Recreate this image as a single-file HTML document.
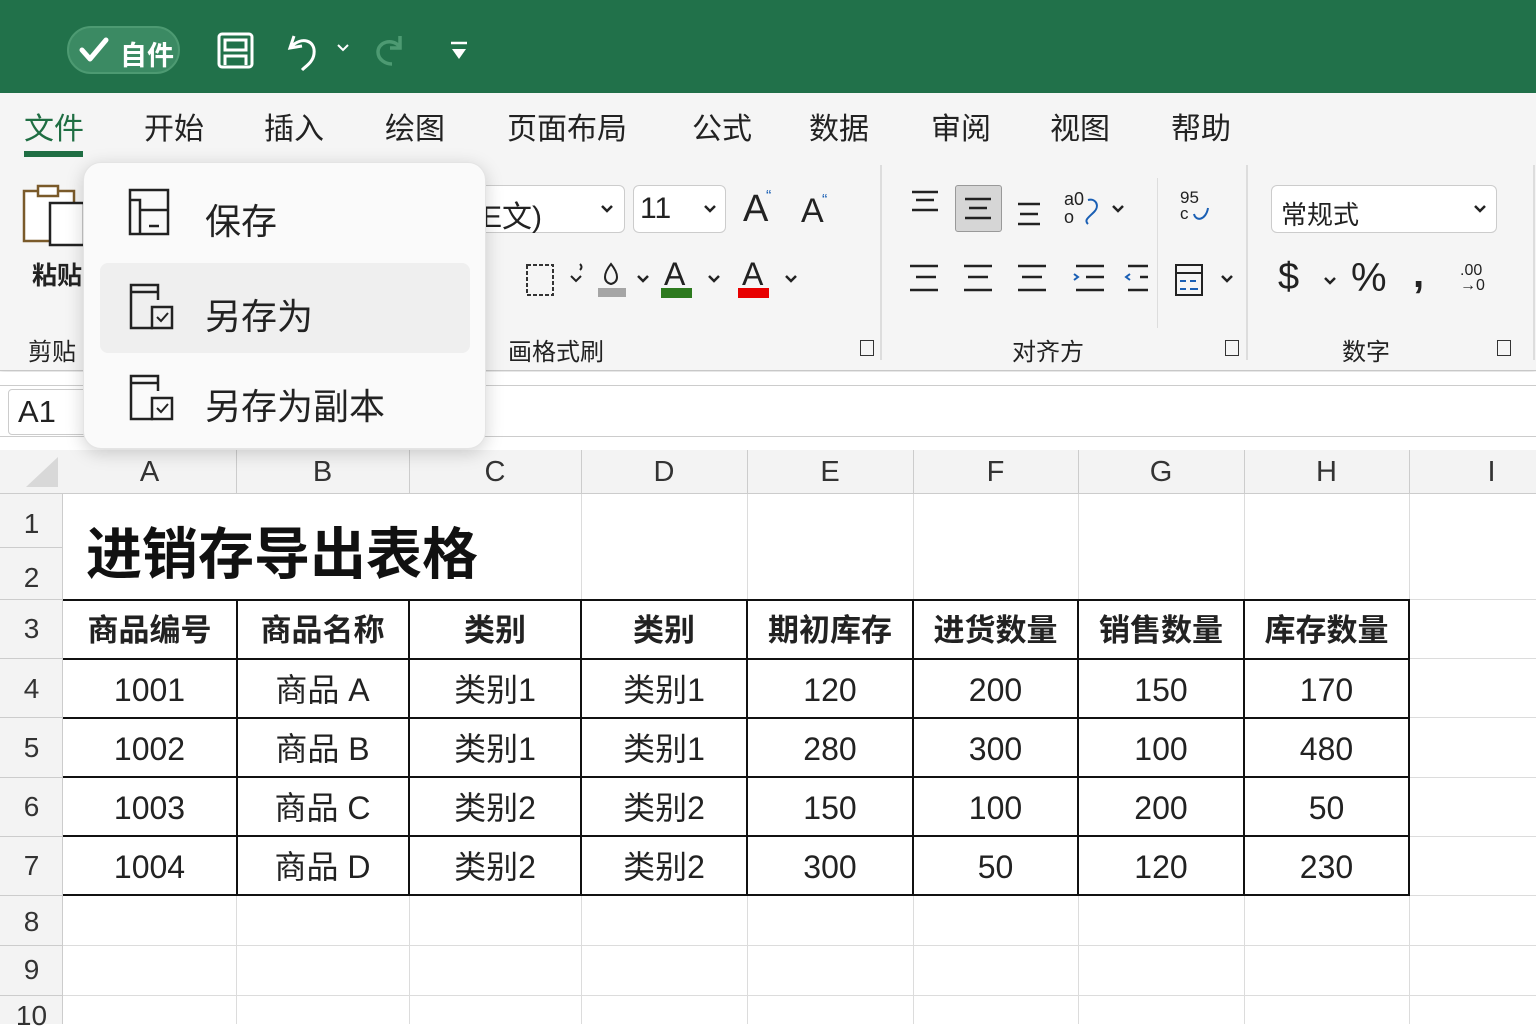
<!DOCTYPE html>
<html><head><meta charset="utf-8"><style>
*{margin:0;padding:0;box-sizing:border-box}
body{width:1536px;height:1024px;overflow:hidden;background:#fff;position:relative;font-family:"Liberation Sans","Noto Sans CJK SC",sans-serif;color:#222}
.a{position:absolute}
.t{position:absolute;white-space:nowrap}
.gl{position:absolute;background:#dcdcdc}
.bl{position:absolute;background:#111}
.cell{position:absolute;text-align:center;font-size:32px;line-height:59px}
.hd{font-weight:bold;font-size:31px}
.rh{position:absolute;left:0;width:63px;text-align:center;font-size:28px;color:#333}
.ch{position:absolute;top:450px;height:44px;text-align:center;font-size:29px;line-height:44px;color:#333}
</style></head><body>
<div class="a" style="left:0;top:0;width:1536px;height:93px;background:#21714a"></div>
<div class="a" style="left:67px;top:26px;width:113px;height:48px;border-radius:24px;background:#3b8a63;border:2px solid #4d9a72"></div>
<svg class="a" style="left:78px;top:36px" width="32" height="28"><path d="M4 14 L12 23 L28 4" stroke="#fff" stroke-width="5" fill="none" stroke-linecap="round" stroke-linejoin="round"/></svg>
<div class="t" style="left:120px;top:34px;font-size:27px;color:#fff;font-weight:bold">自件</div>
<svg class="a" style="left:217px;top:32px" width="38" height="38"><rect x="2" y="2" width="33" height="33" rx="3" stroke="#fff" stroke-width="3" fill="none"/><path d="M8 8h21v10H8z M8 33V24h21v9" stroke="#fff" stroke-width="3" fill="none"/></svg>
<svg class="a" style="left:286px;top:30px" width="40" height="42"><path d="M8 6 L4 18 L16 16 M5 17 C15 6 30 10 28 24 C27 32 20 36 16 40" stroke="#fff" stroke-width="3" fill="none"/></svg>
<svg class="a" style="left:337px;top:44px" width="12" height="8"><path d="M1 1l5 5 5-5" stroke="#fff" stroke-width="2" fill="none"/></svg>
<svg class="a" style="left:372px;top:32px" width="38" height="36"><path d="M28 4v12H18 M27 14C20 6 6 10 6 20c0 8 8 12 14 12" stroke="#4d9a72" stroke-width="3.5" fill="none"/></svg>
<svg class="a" style="left:449px;top:40px" width="20" height="22"><path d="M2 3h16" stroke="#fff" stroke-width="2.5"/><path d="M3 9h14l-7 10z" fill="#fff"/></svg>

<div class="a" style="left:0;top:93px;width:1536px;height:278px;background:#f5f5f5;border-bottom:1px solid #c8c8c8;box-shadow:0 3px 6px rgba(0,0,0,.12)"></div>
<div class="t" style="left:24px;top:104px;font-size:30px;color:#1f6e43">文件</div>
<div class="a" style="left:24px;top:151px;width:59px;height:6px;background:#1f6e43"></div>
<div class="t" style="left:144px;top:104px;font-size:30px">开始</div>
<div class="t" style="left:264px;top:104px;font-size:30px">插入</div>
<div class="t" style="left:385px;top:104px;font-size:30px">绘图</div>
<div class="t" style="left:507px;top:104px;font-size:30px">页面布局</div>
<div class="t" style="left:692px;top:104px;font-size:30px">公式</div>
<div class="t" style="left:809px;top:104px;font-size:30px">数据</div>
<div class="t" style="left:931px;top:104px;font-size:30px">审阅</div>
<div class="t" style="left:1050px;top:104px;font-size:30px">视图</div>
<div class="t" style="left:1171px;top:104px;font-size:30px">帮助</div>

<svg class="a" style="left:22px;top:183px" width="64" height="66"><rect x="2" y="8" width="50" height="50" stroke="#7a5a2a" stroke-width="2.5" fill="#fff"/><rect x="16" y="3" width="20" height="10" stroke="#7a5a2a" stroke-width="2.5" fill="#fff"/><rect x="28" y="20" width="34" height="42" stroke="#222" stroke-width="2.5" fill="#fff"/></svg>
<div class="t" style="left:32px;top:256px;font-size:25px;font-weight:bold">粘贴</div>
<div class="t" style="left:28px;top:332px;font-size:24px">剪贴</div>

<div class="a" style="left:470px;top:185px;width:155px;height:48px;background:#fff;border:1px solid #ccc;border-radius:6px"></div>
<div class="t" style="left:482px;top:192px;font-size:30px">E文)</div>
<svg class="a" style="left:600px;top:204px" width="14" height="10"><path d="M2 2l5 5 5-5" stroke="#222" stroke-width="2.5" fill="none"/></svg>
<div class="a" style="left:633px;top:185px;width:93px;height:48px;background:#fff;border:1px solid #ccc;border-radius:6px"></div>
<div class="t" style="left:640px;top:192px;font-size:30px">11</div>
<svg class="a" style="left:703px;top:204px" width="14" height="10"><path d="M2 2l5 5 5-5" stroke="#222" stroke-width="2.5" fill="none"/></svg>
<div class="t" style="left:743px;top:188px;font-size:38px">A</div><div class="t" style="left:766px;top:188px;font-size:16px;color:#1a5fb4">“</div>
<div class="t" style="left:801px;top:192px;font-size:34px">A</div><div class="t" style="left:822px;top:192px;font-size:16px;color:#1a5fb4">“</div>

<svg class="a" style="left:525px;top:262px" width="30" height="38"><rect x="2" y="3" width="26" height="30" stroke="#333" stroke-width="2" fill="none" stroke-dasharray="4 2"/></svg>
<svg class="a" style="left:568px;top:262px" width="18" height="24"><path d="M12 2q3 3 0 6 M3 14l5 5 5-5" stroke="#222" stroke-width="2" fill="none"/></svg>
<svg class="a" style="left:597px;top:260px" width="30" height="40"><path d="M14 4c-8 10-8 18 0 20 8-2 8-10 0-20z" stroke="#222" stroke-width="2" fill="none"/><rect x="1" y="28" width="28" height="9" fill="#a5a5a5"/></svg>
<svg class="a" style="left:636px;top:274px" width="14" height="10"><path d="M2 2l5 5 5-5" stroke="#222" stroke-width="2.5" fill="none"/></svg>
<div class="t" style="left:664px;top:256px;font-size:32px">A</div><div class="a" style="left:661px;top:288px;width:31px;height:10px;background:#2d7a1e"></div>
<svg class="a" style="left:707px;top:274px" width="14" height="10"><path d="M2 2l5 5 5-5" stroke="#222" stroke-width="2.5" fill="none"/></svg>
<div class="t" style="left:742px;top:256px;font-size:32px">A</div><div class="a" style="left:738px;top:288px;width:31px;height:10px;background:#e80000"></div>
<svg class="a" style="left:784px;top:274px" width="14" height="10"><path d="M2 2l5 5 5-5" stroke="#222" stroke-width="2.5" fill="none"/></svg>
<div class="t" style="left:508px;top:332px;font-size:24px">画格式刷</div>
<div class="a" style="left:860px;top:340px;width:14px;height:16px;border:1.5px solid #333"></div>
<div class="a" style="left:880px;top:165px;width:2px;height:195px;background:#ddd"></div>

<svg class="a" style="left:910px;top:188px" width="30" height="30"><path d="M2 4h26M6 12h18M2 22h26" stroke="#222" stroke-width="2.5"/></svg>
<div class="a" style="left:955px;top:185px;width:47px;height:47px;background:#d6d6d6;border:1.5px solid #999;border-radius:3px"></div>
<svg class="a" style="left:963px;top:196px" width="30" height="28"><path d="M2 3h26M6 12h18M2 22h26" stroke="#222" stroke-width="2.5"/></svg>
<svg class="a" style="left:1016px;top:200px" width="30" height="28"><path d="M2 4h22M4 14h18M2 24h22" stroke="#222" stroke-width="2.5"/></svg>
<div class="t" style="left:1064px;top:190px;font-size:18px;line-height:18px">a0<br>o</div>
<svg class="a" style="left:1078px;top:196px" width="24" height="30"><path d="M10 4c8-2 12 6 6 12s-10 8-6 12" stroke="#1a5fb4" stroke-width="2" fill="none"/></svg>
<svg class="a" style="left:1111px;top:204px" width="14" height="10"><path d="M2 2l5 5 5-5" stroke="#222" stroke-width="2.5" fill="none"/></svg>
<svg class="a" style="left:908px;top:262px" width="240" height="34"><g stroke="#222" stroke-width="2.5"><path d="M2 4h28M8 15h20M2 28h28"/><path d="M56 4h28M60 15h20M56 28h28"/><path d="M110 4h28M114 15h20M110 28h28"/><path d="M168 4h28M178 15h18M168 28h28"/><path d="M220 4h28M232 15h16M220 28h28"/></g><path d="M166 12l4 3-4 3M222 12l-4 3 4 3" stroke="#1a5fb4" stroke-width="2" fill="none"/></svg>
<div class="a" style="left:1157px;top:178px;width:1px;height:150px;background:#ddd"></div>
<div class="t" style="left:1180px;top:190px;font-size:17px;line-height:16px">95<br>c</div>
<svg class="a" style="left:1190px;top:200px" width="22" height="24"><path d="M4 14c2 8 12 6 14-6" stroke="#1a5fb4" stroke-width="2" fill="none"/></svg>
<svg class="a" style="left:1174px;top:263px" width="32" height="34"><rect x="2" y="2" width="26" height="30" stroke="#222" stroke-width="2" fill="none"/><path d="M2 10h26" stroke="#222" stroke-width="2"/><path d="M6 18h6M16 18h6M6 26h6M16 26h8" stroke="#1a5fb4" stroke-width="2"/></svg>
<svg class="a" style="left:1220px;top:274px" width="14" height="10"><path d="M2 2l5 5 5-5" stroke="#222" stroke-width="2.5" fill="none"/></svg>
<div class="t" style="left:1012px;top:332px;font-size:24px">对齐方</div>
<div class="a" style="left:1225px;top:340px;width:14px;height:16px;border:1.5px solid #333"></div>
<div class="a" style="left:1246px;top:165px;width:2px;height:195px;background:#ddd"></div>

<div class="a" style="left:1271px;top:185px;width:226px;height:48px;background:#fff;border:1px solid #ccc;border-radius:6px"></div>
<div class="t" style="left:1281px;top:195px;font-size:26px">常规式</div>
<svg class="a" style="left:1473px;top:204px" width="14" height="10"><path d="M2 2l5 5 5-5" stroke="#222" stroke-width="2.5" fill="none"/></svg>
<div class="t" style="left:1278px;top:256px;font-size:38px">$</div>
<svg class="a" style="left:1323px;top:276px" width="14" height="10"><path d="M2 2l5 5 5-5" stroke="#222" stroke-width="2.5" fill="none"/></svg>
<div class="t" style="left:1351px;top:256px;font-size:40px">%</div>
<div class="t" style="left:1413px;top:252px;font-size:40px;font-weight:bold">,</div>
<div class="t" style="left:1460px;top:263px;font-size:16px;line-height:15px">.00<br>→0</div>
<div class="t" style="left:1342px;top:332px;font-size:24px">数字</div>
<div class="a" style="left:1497px;top:340px;width:14px;height:16px;border:1.5px solid #333"></div>
<div class="a" style="left:1533px;top:165px;width:2px;height:195px;background:#ddd"></div>

<div class="a" style="left:0;top:372px;width:1536px;height:78px;background:#fff"></div>
<div class="a" style="left:0;top:385px;width:1536px;height:52px;border-top:1px solid #ccc;border-bottom:1px solid #ccc"></div>
<div class="a" style="left:8px;top:389px;width:80px;height:46px;border:1px solid #ccc;border-radius:4px;background:#fff"></div>
<div class="t" style="left:18px;top:394px;font-size:31px">A1</div>

<div class="a" style="left:0;top:450px;width:1536px;height:44px;background:#f3f3f3;border-bottom:1px solid #ccc"></div>
<div class="a" style="left:0;top:494px;width:63px;height:530px;background:#f3f3f3;border-right:1px solid #ccc"></div>
<svg class="a" style="left:24px;top:455px" width="36" height="34"><path d="M34 2V32H2z" fill="#d8d8d8"/></svg>
<div class="ch" style="left:63px;width:173px">A</div>
<div class="ch" style="left:236px;width:173px">B</div>
<div class="ch" style="left:409px;width:172px">C</div>
<div class="ch" style="left:581px;width:166px">D</div>
<div class="ch" style="left:747px;width:166px">E</div>
<div class="ch" style="left:913px;width:165px">F</div>
<div class="ch" style="left:1078px;width:166px">G</div>
<div class="ch" style="left:1244px;width:165px">H</div>
<div class="ch" style="left:1409px;width:165px">I</div>
<div class="a" style="left:236px;top:450px;width:1px;height:44px;background:#ccc"></div>
<div class="a" style="left:409px;top:450px;width:1px;height:44px;background:#ccc"></div>
<div class="a" style="left:581px;top:450px;width:1px;height:44px;background:#ccc"></div>
<div class="a" style="left:747px;top:450px;width:1px;height:44px;background:#ccc"></div>
<div class="a" style="left:913px;top:450px;width:1px;height:44px;background:#ccc"></div>
<div class="a" style="left:1078px;top:450px;width:1px;height:44px;background:#ccc"></div>
<div class="a" style="left:1244px;top:450px;width:1px;height:44px;background:#ccc"></div>
<div class="a" style="left:1409px;top:450px;width:1px;height:44px;background:#ccc"></div>

<div class="rh" style="top:508px">1</div>
<div class="rh" style="top:562px">2</div>
<div class="rh" style="top:613px">3</div>
<div class="rh" style="top:673px">4</div>
<div class="rh" style="top:732px">5</div>
<div class="rh" style="top:791px">6</div>
<div class="rh" style="top:850px">7</div>
<div class="rh" style="top:906px">8</div>
<div class="rh" style="top:954px">9</div>
<div class="rh" style="top:1000px">10</div>
<div class="a" style="left:0;top:547px;width:63px;height:1px;background:#ccc"></div>
<div class="a" style="left:0;top:599px;width:63px;height:1px;background:#ccc"></div>
<div class="a" style="left:0;top:658px;width:63px;height:1px;background:#ccc"></div>
<div class="a" style="left:0;top:717px;width:63px;height:1px;background:#ccc"></div>
<div class="a" style="left:0;top:777px;width:63px;height:1px;background:#ccc"></div>
<div class="a" style="left:0;top:836px;width:63px;height:1px;background:#ccc"></div>
<div class="a" style="left:0;top:895px;width:63px;height:1px;background:#ccc"></div>
<div class="a" style="left:0;top:945px;width:63px;height:1px;background:#ccc"></div>
<div class="a" style="left:0;top:995px;width:63px;height:1px;background:#ccc"></div>

<div class="gl" style="left:1409px;top:599px;width:127px;height:1px"></div>
<div class="gl" style="left:1409px;top:658px;width:127px;height:1px"></div>
<div class="gl" style="left:1409px;top:717px;width:127px;height:1px"></div>
<div class="gl" style="left:1409px;top:777px;width:127px;height:1px"></div>
<div class="gl" style="left:1409px;top:836px;width:127px;height:1px"></div>
<div class="gl" style="left:1409px;top:895px;width:127px;height:1px"></div>
<div class="gl" style="left:63px;top:945px;width:1473px;height:1px"></div>
<div class="gl" style="left:63px;top:995px;width:1473px;height:1px"></div>
<div class="gl" style="left:581px;top:494px;width:1px;height:105px"></div>
<div class="gl" style="left:747px;top:494px;width:1px;height:105px"></div>
<div class="gl" style="left:913px;top:494px;width:1px;height:105px"></div>
<div class="gl" style="left:1078px;top:494px;width:1px;height:105px"></div>
<div class="gl" style="left:1244px;top:494px;width:1px;height:105px"></div>
<div class="gl" style="left:1409px;top:494px;width:1px;height:105px"></div>
<div class="gl" style="left:236px;top:895px;width:1px;height:129px"></div>
<div class="gl" style="left:409px;top:895px;width:1px;height:129px"></div>
<div class="gl" style="left:581px;top:895px;width:1px;height:129px"></div>
<div class="gl" style="left:747px;top:895px;width:1px;height:129px"></div>
<div class="gl" style="left:913px;top:895px;width:1px;height:129px"></div>
<div class="gl" style="left:1078px;top:895px;width:1px;height:129px"></div>
<div class="gl" style="left:1244px;top:895px;width:1px;height:129px"></div>
<div class="gl" style="left:1409px;top:494px;width:1px;height:530px"></div>

<div class="t" style="left:86px;top:510px;font-size:56px;font-weight:bold;color:#111">进销存导出表格</div>

<div class="bl" style="left:63px;top:599px;width:1347px;height:2px"></div>
<div class="bl" style="left:63px;top:658px;width:1347px;height:2px"></div>
<div class="bl" style="left:63px;top:717px;width:1347px;height:2px"></div>
<div class="bl" style="left:63px;top:776px;width:1347px;height:2px"></div>
<div class="bl" style="left:63px;top:835px;width:1347px;height:2px"></div>
<div class="bl" style="left:63px;top:894px;width:1347px;height:2px"></div>
<div class="bl" style="left:236px;top:599px;width:2px;height:297px"></div>
<div class="bl" style="left:408px;top:599px;width:2px;height:297px"></div>
<div class="bl" style="left:580px;top:599px;width:2px;height:297px"></div>
<div class="bl" style="left:746px;top:599px;width:2px;height:297px"></div>
<div class="bl" style="left:912px;top:599px;width:2px;height:297px"></div>
<div class="bl" style="left:1077px;top:599px;width:2px;height:297px"></div>
<div class="bl" style="left:1243px;top:599px;width:2px;height:297px"></div>
<div class="bl" style="left:1408px;top:599px;width:2px;height:297px"></div>

<div class="cell hd" style="left:63px;top:601px;width:173px">商品编号</div>
<div class="cell hd" style="left:236px;top:601px;width:173px">商品名称</div>
<div class="cell hd" style="left:409px;top:601px;width:172px">类别</div>
<div class="cell hd" style="left:581px;top:601px;width:166px">类别</div>
<div class="cell hd" style="left:747px;top:601px;width:166px">期初库存</div>
<div class="cell hd" style="left:913px;top:601px;width:165px">进货数量</div>
<div class="cell hd" style="left:1078px;top:601px;width:166px">销售数量</div>
<div class="cell hd" style="left:1244px;top:601px;width:165px">库存数量</div>

<div class="cell" style="left:63px;top:661px;width:173px">1001</div><div class="cell" style="left:236px;top:661px;width:173px">商品 A</div><div class="cell" style="left:409px;top:661px;width:172px">类别1</div><div class="cell" style="left:581px;top:661px;width:166px">类别1</div><div class="cell" style="left:747px;top:661px;width:166px">120</div><div class="cell" style="left:913px;top:661px;width:165px">200</div><div class="cell" style="left:1078px;top:661px;width:166px">150</div><div class="cell" style="left:1244px;top:661px;width:165px">170</div>
<div class="cell" style="left:63px;top:720px;width:173px">1002</div><div class="cell" style="left:236px;top:720px;width:173px">商品 B</div><div class="cell" style="left:409px;top:720px;width:172px">类别1</div><div class="cell" style="left:581px;top:720px;width:166px">类别1</div><div class="cell" style="left:747px;top:720px;width:166px">280</div><div class="cell" style="left:913px;top:720px;width:165px">300</div><div class="cell" style="left:1078px;top:720px;width:166px">100</div><div class="cell" style="left:1244px;top:720px;width:165px">480</div>
<div class="cell" style="left:63px;top:779px;width:173px">1003</div><div class="cell" style="left:236px;top:779px;width:173px">商品 C</div><div class="cell" style="left:409px;top:779px;width:172px">类别2</div><div class="cell" style="left:581px;top:779px;width:166px">类别2</div><div class="cell" style="left:747px;top:779px;width:166px">150</div><div class="cell" style="left:913px;top:779px;width:165px">100</div><div class="cell" style="left:1078px;top:779px;width:166px">200</div><div class="cell" style="left:1244px;top:779px;width:165px">50</div>
<div class="cell" style="left:63px;top:838px;width:173px">1004</div><div class="cell" style="left:236px;top:838px;width:173px">商品 D</div><div class="cell" style="left:409px;top:838px;width:172px">类别2</div><div class="cell" style="left:581px;top:838px;width:166px">类别2</div><div class="cell" style="left:747px;top:838px;width:166px">300</div><div class="cell" style="left:913px;top:838px;width:165px">50</div><div class="cell" style="left:1078px;top:838px;width:166px">120</div><div class="cell" style="left:1244px;top:838px;width:165px">230</div>

<div class="a" style="left:83px;top:162px;width:403px;height:287px;background:#fafafa;border-radius:18px;border:1px solid #e4e4e4;box-shadow:0 4px 18px rgba(0,0,0,.18)"></div>
<div class="a" style="left:100px;top:263px;width:370px;height:90px;background:#efefef;border-radius:8px"></div>
<svg class="a" style="left:125px;top:186px" width="50" height="54"><path d="M5 4h38v44H5z" stroke="#222" stroke-width="2.5" fill="none"/><path d="M5 14h10v34M15 24h28M24 40h10" stroke="#222" stroke-width="2.5" fill="none"/></svg>
<div class="t" style="left:205px;top:193px;font-size:36px">保存</div>
<svg class="a" style="left:128px;top:282px" width="48" height="50"><path d="M30 18V3H3v43h22" stroke="#222" stroke-width="2.5" fill="none"/><path d="M3 10h27" stroke="#222" stroke-width="2.5"/><rect x="24" y="25" width="20" height="21" stroke="#222" stroke-width="2.5" fill="none"/><path d="M29 35l4 4 7-8" stroke="#222" stroke-width="2" fill="none"/></svg>
<div class="t" style="left:205px;top:288px;font-size:36px">另存为</div>
<svg class="a" style="left:128px;top:373px" width="48" height="50"><path d="M30 18V3H3v43h22" stroke="#222" stroke-width="2.5" fill="none"/><path d="M3 10h27" stroke="#222" stroke-width="2.5"/><rect x="24" y="25" width="20" height="21" stroke="#222" stroke-width="2.5" fill="none"/><path d="M29 35l4 4 7-8" stroke="#222" stroke-width="2" fill="none"/></svg>
<div class="t" style="left:205px;top:378px;font-size:36px">另存为副本</div>
</body></html>
